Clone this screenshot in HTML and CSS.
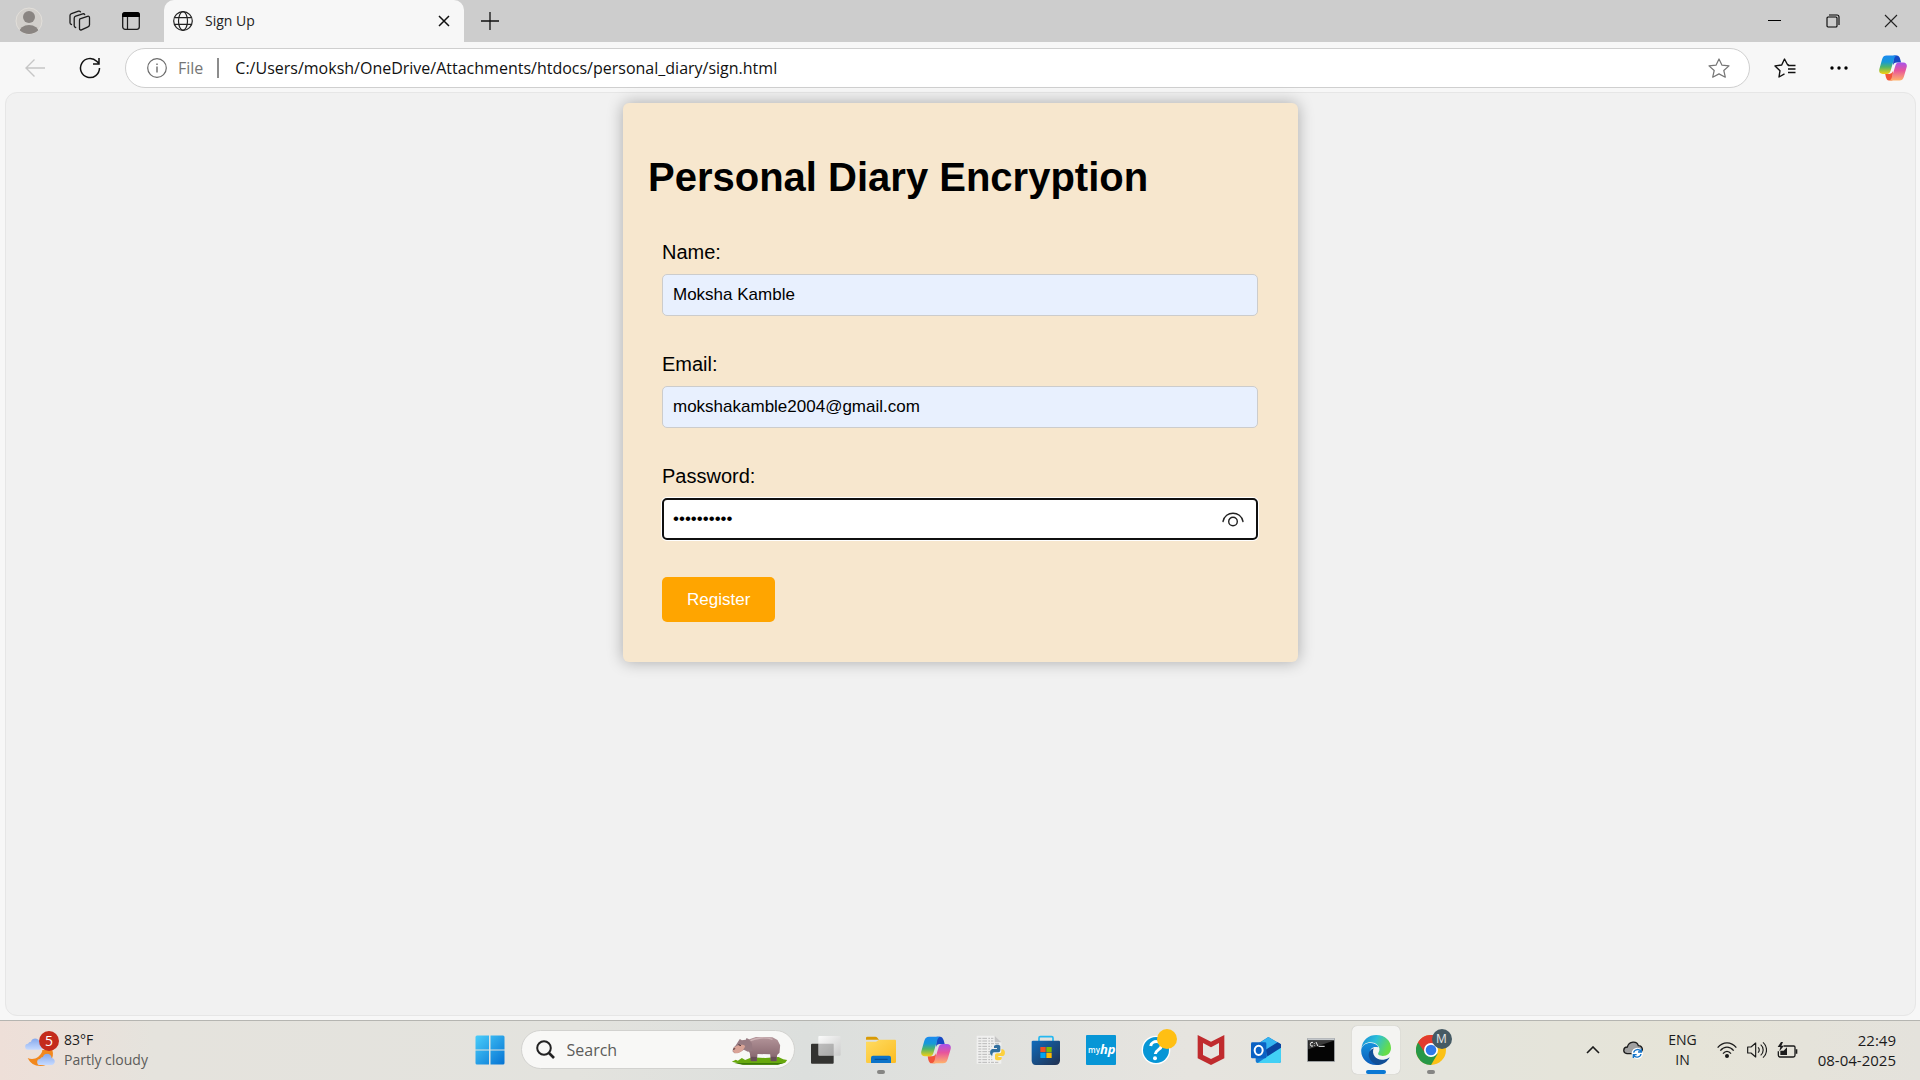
FILE: index.html
```html
<!DOCTYPE html>
<html lang="en">
<head>
<meta charset="utf-8">
<meta name="viewport" content="width=device-width, initial-scale=1">
<title>Sign Up</title>
<link rel="stylesheet" href="styles.css">
</head>
<body>
<svg class="defs" aria-hidden="true">
  <defs>
    <linearGradient id="cp-a" x1="0" y1="0" x2="0" y2="1"><stop offset="0" stop-color="#1b8af0"/><stop offset=".35" stop-color="#1799d8"/><stop offset=".62" stop-color="#4fb56a"/><stop offset="1" stop-color="#f5cf12"/></linearGradient>
    <linearGradient id="cp-b" x1="0" y1="0" x2="0" y2="1"><stop offset="0" stop-color="#a653ec"/><stop offset=".45" stop-color="#e8559b"/><stop offset="1" stop-color="#ffb36b"/></linearGradient>
    <symbol id="copilot" viewBox="0 0 90 82">
      <path d="M47 1h10c6 0 9 5 11 11l3 11H57c-7 0-10 4-12 9z" fill="#1749c4"/>
      <path d="M43 81H32c-6 0-8-5-10-11l-2-10h13c7 0 10-4 12-9z" fill="#f2553a"/>
      <path d="M24 1h34c-6 1-8 6-10 13L37 51c-2 6-5 9-11 9H12C3 60-1 54 1 45L10 13C13 4 17 1 24 1z" fill="url(#cp-a)"/>
      <path d="M66 81H32c6-1 8-6 10-13l11-36c2-6 5-9 11-9h14c9 0 13 6 11 15l-9 31c-3 9-7 12-14 12z" fill="url(#cp-b)"/>
    </symbol>
    <symbol id="cloud" viewBox="0 0 54 36"><path d="M10 35a9 9 0 0 1-1-18 10 10 0 0 1 9-6c3-13 24-13 26 3 13 2 12 21-1 21z" fill="url(#cl)"/></symbol>
    <linearGradient id="cl" x1="0" y1="0" x2="0" y2="1"><stop offset="0" stop-color="#86a9ec"/><stop offset="1" stop-color="#c6daff"/></linearGradient>
    <linearGradient id="win" x1="0" y1="0" x2="1" y2="1"><stop offset="0" stop-color="#49cdfa"/><stop offset="1" stop-color="#0573d3"/></linearGradient>
    <linearGradient id="hip" x1="0" y1="0" x2="0" y2="1"><stop offset="0" stop-color="#b39499"/><stop offset="1" stop-color="#806068"/></linearGradient>
    <linearGradient id="fold" x1="0" y1="0" x2="1" y2="1"><stop offset="0" stop-color="#ffdc62"/><stop offset="1" stop-color="#fbbc22"/></linearGradient>
    <linearGradient id="store" x1="0" y1="0" x2="1" y2="1"><stop offset="0" stop-color="#0f6cbd"/><stop offset="1" stop-color="#22304f"/></linearGradient>
    <linearGradient id="edge-a" x1="0" y1="0" x2="1" y2=".4"><stop offset="0" stop-color="#1687d6"/><stop offset=".5" stop-color="#2bbfd9"/><stop offset="1" stop-color="#66dd48"/></linearGradient>
    <linearGradient id="edge-b" x1="0" y1="0" x2="0" y2="1"><stop offset="0" stop-color="#1591dc"/><stop offset="1" stop-color="#0c5cba"/></linearGradient>
    <linearGradient id="glass" x1="0" y1="0" x2="1" y2="1"><stop offset="0" stop-color="#fff"/><stop offset="1" stop-color="#c9c9c9"/></linearGradient>
  </defs>
</svg>

<header class="tabbar">
  <div class="tab-tools">
    <button class="tool" aria-label="Profile"><svg width="28" height="28" viewBox="0 0 28 28"><clipPath id="av"><circle cx="14" cy="14" r="13"/></clipPath><circle cx="14" cy="14" r="13" fill="#d2cfcb" stroke="#e2dfda"/><g fill="#8a8582" clip-path="url(#av)"><circle cx="14" cy="10" r="6"/><ellipse cx="14" cy="26" rx="10" ry="8"/></g></svg></button>
    <button class="tool" aria-label="Workspaces"><svg width="22" height="22" viewBox="0 0 22 22" fill="none" stroke="#1b1b1b" stroke-width="1.3" stroke-linejoin="round" stroke-linecap="round"><path d="M11 8.800l7.500-2.500q2-.5 2 1.500v7q0 1.500-1.500 2l-6.500 3q-2 .7-2-1.300V10.500q0-1.200.5-1.700z"/><path d="M6.700 17.500q-1.500-.2-1.500-1.700V8.200q0-1.500 1.500-2l7-2.400q1.500-.3 2 .8"/><path d="M2.500 14.500Q1 14.300 1 12.800V5.600Q1 4.200 2.500 3.600l7-2.400q1.300-.3 2 .6"/></svg></button>
    <button class="tool" aria-label="Tab actions"><svg width="20" height="20" viewBox="0 0 20 20"><rect x="1.700" y="1.700" width="16.600" height="16.600" rx="2.500" fill="none" stroke="#1b1b1b" stroke-width="1.300"/><path d="M1 6V4q0-3 3-3h12q3 0 3 3v2z"/><path d="M6.500 6v12" stroke="#1b1b1b" stroke-width="1.200"/></svg></button>
  </div>
  <div class="tab">
    <svg width="20" height="20" viewBox="0 0 20 20" fill="none" stroke="#222" stroke-width="1.200"><circle cx="10" cy="10" r="9.300"/><ellipse cx="10" cy="10" rx="4.500" ry="9.300"/><path d="M1.500 6.700h17M1.500 13.300h17"/></svg>
    <span class="tab-title">Sign Up</span>
    <button class="tool-close" aria-label="Close tab"><svg width="12" height="12" viewBox="0 0 12 12" stroke="#111" stroke-width="1.500"><path d="M1 1l10 10M11 1L1 11"/></svg></button>
  </div>
  <button class="tool" aria-label="New tab"><svg width="18" height="18" viewBox="0 0 18 18" stroke="#111" stroke-width="1.300"><path d="M9 0v18M0 9h18"/></svg></button>
  <div class="window-buttons">
    <button aria-label="Minimize"><svg width="14" height="14" viewBox="0 0 14 14"><path d="M0 6.500h13" stroke="#000"/></svg></button>
    <button aria-label="Restore"><svg width="14" height="14" viewBox="0 0 14 14" fill="none" stroke="#000" stroke-width="1.100"><rect x="1" y="3" width="10" height="10" rx="1"/><path d="M3 1h8q2 0 2 2v8"/></svg></button>
    <button aria-label="Close"><svg width="14" height="14" viewBox="0 0 14 14" stroke="#222" stroke-width="1.100"><path d="M1 1l12 12M13 1L1 13"/></svg></button>
  </div>
</header>

<nav class="toolbar">
  <button class="nav-button" aria-label="Back" disabled><svg width="20" height="18" viewBox="0 0 20 18" fill="none" stroke="#c6c6c6" stroke-width="1.400"><path d="M20 9H1M9.500.500L1 9l8.500 8.500"/></svg></button>
  <button class="nav-button" aria-label="Refresh"><svg width="22" height="22" viewBox="0 0 22 22" fill="none" stroke="#111" stroke-width="1.500"><path d="M20.500 11A9.500 9.500 0 1 1 17.700 4.300L20 6.500M20 1v6h-6"/></svg></button>
  <div class="address">
    <svg width="20" height="20" viewBox="0 0 20 20" fill="none" stroke="#6b6b6b" stroke-width="1.200"><circle cx="10" cy="10" r="9.300"/><path d="M10 8.500v6M10 5.500v1.500" stroke-width="1.400"/></svg>
    <span class="scheme">File</span>
    <span class="divider"></span>
    <input class="url" type="text" aria-label="Address" value="C:/Users/moksh/OneDrive/Attachments/htdocs/personal_diary/sign.html">
    <button class="star" aria-label="Add to favorites"><svg width="22" height="20" viewBox="0 0 22 20" fill="none" stroke="#757575" stroke-width="1.200" stroke-linejoin="round"><path d="M11 1l3 6.200 7 .7-5.200 4.600 1.500 6.700L11 15.900l-6.300 3.300 1.500-6.700L1 7.900l7-.7z"/></svg></button>
  </div>
  <div class="toolbar-end">
    <button aria-label="Favorites"><svg width="22" height="20" viewBox="0 0 22 20" fill="none" stroke="#111" stroke-width="1.400" stroke-linejoin="round"><path d="M15 7L13.700 7 10.500 1 7.700 7 1 7.900l5 4.800-1 6.300 5.500-3.100"/><path d="M14 7.500h7.500M14 11h7.500M14 14.500h7.500"/></svg></button>
    <button aria-label="Settings and more"><svg width="18" height="4" viewBox="0 0 18 4"><circle cx="2" cy="2" r="1.700"/><circle cx="9" cy="2" r="1.700"/><circle cx="16" cy="2" r="1.700"/></svg></button>
    <button aria-label="Copilot"><svg width="28" height="26"><use href="#copilot"/></svg></button>
  </div>
</nav>

<main class="viewport">
  <section class="card">
    <h1>Personal Diary Encryption</h1>
    <form class="signup">
      <label for="name">Name:</label>
      <input class="field autofilled" id="name" type="text" value="Moksha Kamble">
      <label for="email">Email:</label>
      <input class="field autofilled" id="email" type="email" value="mokshakamble2004@gmail.com">
      <label for="password">Password:</label>
      <div class="password">
        <input class="field active" id="password" type="password" value="diarypass1">
        <button class="reveal" type="button" aria-label="Show password"><svg width="22" height="16" viewBox="0 0 22 16" fill="none" stroke="#222" stroke-width="1.400" stroke-linecap="round"><path d="M1 9.500C3 -1.500 19 -1.500 21 9.500"/><circle cx="11" cy="9.500" r="4.300"/></svg></button>
      </div>
      <button class="register" type="button">Register</button>
    </form>
  </section>
</main>

<footer class="taskbar">
  <div class="weather">
    <div class="weather-icon">
      <svg width="34" height="36" viewBox="0 0 102 108"><path d="M8 78c10 4 22 4 32-4 9-7 12-15 12-20h30c8 24-10 48-36 48-18 0-30-8-38-24z" fill="#f2881d"/><use href="#cloud" x="0" y="18" width="54" height="36"/><use href="#cloud" x="36" y="64" width="54" height="36"/></svg>
      <span class="badge">5</span>
    </div>
    <div class="weather-text"><span>83°F</span><span class="muted">Partly cloudy</span></div>
  </div>

  <div class="apps">
    <button class="app" aria-label="Start"><svg width="30" height="30" viewBox="0 0 30 30"><g fill="url(#win)"><path d="M2 .500h12v14H.500V2Q.500.500 2 .500zM15.500.500H28q1.500 0 1.500 1.500v12.500h-14zM.500 15.500H14v14H2Q.500 29.500.500 28zM15.500 15.500h14V28q0 1.500-1.500 1.500H15.500z"/></g></svg></button>
    <label class="search">
      <svg width="19" height="19" viewBox="0 0 19 19" fill="none" stroke="#222" stroke-width="2"><circle cx="8" cy="8" r="6.800"/><path d="M13 13l5 5" stroke-width="2.600"/></svg>
      <input type="search" placeholder="Search" aria-label="Search">
      <svg width="57" height="32" viewBox="816 64 170 96">
        <path d="M818 147l12-6 6 3 12-8 10 6 20-8 40 2 40-3 14 7 12 2-6 8-24 6h-100z" fill="#67a80d"/>
        <path d="M826 151h148l-18 5H850z" fill="#3d7b08"/>
        <path d="M866 110l6 12 3 24h18l2-22 38 1 2 21h17l2-19 7-7 2-22-8-16-15-8-50-1-24 8z" fill="url(#hip)"/>
        <path d="M838 85l4-6 6 4 12-2 2-5 6 3 10 12 2 24-14 2-12-6-16 9-12 2-6-6 2-10 8-8z" fill="#987b82"/>
        <path d="M822 108c8-10 28-16 36-8-4 12-14 22-28 22-8-2-10-8-8-14z" fill="#d9a396"/>
        <path d="M838 96l7 3M822 110l6-2" stroke="#39262b" stroke-width="3"/>
        <path d="M875 132v13h18v-12M935 132v13h17v-12" fill="#685058"/>
        <path d="M874 84c16-8 44-12 66-4" stroke="#cdb3b5" stroke-width="4" fill="none"/>
      </svg>
    </label>
    <button class="app" aria-label="Task view"><svg width="30" height="30" viewBox="0 0 90 90"><rect x="0" y="26" width="68" height="60" rx="3" fill="#333331"/><rect x="22" y="3" width="67" height="59" rx="3" fill="url(#glass)" fill-opacity=".88"/><path d="M22 26h46v36H25q-3 0-3-3z" fill="#777" fill-opacity=".3"/></svg></button>
    <button class="app running" aria-label="File Explorer"><svg width="30" height="30" viewBox="0 0 90 90"><path d="M0 9q0-4 4-4h24q4 0 6 3l5 6H0z" fill="#d99a05"/><path d="M0 20h30l9-6h48q3 0 3 4v62q0 4-4 4H4q-4 0-4-4z" fill="url(#fold)"/><path d="M15 84V68q0-6 6-6h48q6 0 6 6v16z" fill="#0c73c8"/><path d="M26 73h39" stroke="#074b8d" stroke-width="3"/></svg></button>
    <button class="app" aria-label="Copilot"><svg width="30" height="30"><use href="#copilot"/></svg></button>
    <button class="app" aria-label="Python file"><svg width="30" height="30" viewBox="0 0 90 90"><path d="M2 2h54l20 20v64H2z" fill="#f0f0ef"/><path d="M56 2v20h20z" fill="#c5c5c5"/><path d="M7 10h45M7 18h45M7 26h62M7 34h40M7 42h36M7 50h36M7 58h36M7 66h40M7 74h42M7 82h60" stroke="#b9b9b9" stroke-width="3" stroke-dasharray="9 3 14 4 5 3"/><path d="M54 34c2-6 18-6 19 0v12q0 6-6 6H55q-6 0-6 7v3c-9 0-9-19 0-20h14v-3h-9z" fill="#33709f"/><path d="M76 43h4c9 1 9 20 0 20H67v3h10v5c-2 6-19 6-20 0V60q0-5 6-5h8q5 0 5-6z" fill="#fcd03d"/></svg></button>
    <button class="app" aria-label="Microsoft Store"><svg width="30" height="30" viewBox="0 0 90 90"><path d="M24 18V9q0-4 4-4h34q4 0 4 4v9" fill="none" stroke="#26b8f0" stroke-width="5"/><path d="M6 17h78q3 0 3 3v56q0 14-14 14H14Q2 90 2 76V20q0-3 4-3z" fill="url(#store)"/><path d="M28 36h16v15H28z" fill="#f25022"/><path d="M46 36h16v15H46z" fill="#7fba00"/><path d="M28 53h16v16H28z" fill="#00a4ef"/><path d="M46 53h16v16H46z" fill="#ffb900"/></svg></button>
    <button class="app" aria-label="myHP"><svg width="30" height="30" viewBox="0 0 30 30"><rect width="30" height="30" rx="1" fill="#0796d6"/><text class="myhp" x="2" y="18" font-size="8">my</text><text class="myhp slant" x="14" y="19" font-size="13">hp</text></svg></button>
    <button class="app" aria-label="HP Support"><svg width="42" height="42" viewBox="0 0 126 126"><circle cx="63" cy="63" r="43" fill="#fff"/><circle cx="63" cy="63" r="39" fill="#0796d6"/><path d="M47 51c3-18 34-17 32 0-1 11-17 11-18 24" fill="none" stroke="#fff" stroke-width="9"/><circle cx="60" cy="88" r="6" fill="#fff"/><circle cx="96" cy="30" r="30" fill="#ffbf13"/></svg></button>
    <button class="app" aria-label="McAfee"><svg width="28" height="30" viewBox="0 0 84 90"><path d="M2 0l40 20L82 0v70L42 90 2 70zM18 24v36l24 12 24-12V24L42 37z" fill="#c02b2e" fill-rule="evenodd"/></svg></button>
    <button class="app" aria-label="Outlook"><svg width="30" height="30" viewBox="0 0 90 90"><path d="M14 30l38-24 38 22v50q0 6-6 6H20q-6 0-6-6z" fill="#167bd2"/><path d="M22 27l30-21 28 17-36 24z" fill="#34b4f0"/><path d="M44 44l36-22 10 6v12L50 66z" fill="#0b449f"/><path d="M90 38v40q0 6-6 6H20l30-20z" fill="#42d0f5"/><rect x="0" y="22" width="46" height="48" rx="4" fill="#0b62c4"/><ellipse cx="23" cy="46" rx="12" ry="14" fill="none" stroke="#fff" stroke-width="6"/></svg></button>
    <button class="app" aria-label="Command Prompt"><svg width="28" height="24" viewBox="0 0 84 72"><rect x="1" y="1" width="82" height="70" fill="#050505" stroke="#a9adb1" stroke-width="3"/><path d="M2 4h80" stroke="#c4c8cb" stroke-width="6"/><path d="M4 8h76L4 34z" fill="#3a3a3a"/><path d="M18 13q-8-2-8 6t8 5M22 15v2M22 21v2M27 12l6 13M35 25h18" stroke="#eee" stroke-width="3" fill="none"/></svg></button>
    <button class="app current" aria-label="Microsoft Edge"><svg width="30" height="30" viewBox="0 0 90 90"><path d="M1 42C4 14 23 0 46 0c27 0 44 18 44 39 0 15-11 24-25 24-10 0-17-4-12-11 9-15-8-30-24-30C15 22 4 30 1 42z" fill="url(#edge-a)"/><path d="M1 42c4-12 15-19 29-18 12 1 20 6 22 13-22-6-30 12-22 26 6 11 15 18 24 26C25 95-3 72 1 42z" fill="url(#edge-b)"/><path d="M38 40c-8 20 10 38 30 34 8-1 14-4 18-7-7 14-20 22-33 23-16-2-30-17-30-31 0-9 6-16 15-19z" fill="#114f97"/></svg></button>
    <button class="app running" aria-label="Google Chrome"><svg width="30" height="30" viewBox="0 0 90 90"><circle cx="45" cy="45" r="45" fill="#fbc116"/><path d="M45 45L6 22.500A45 45 0 0 1 84 22.500z" fill="#e33b2e"/><path d="M45 45L6 22.500A45 45 0 0 0 45 90l20-34z" fill="#279847"/><path d="M45 25h39a45 45 0 0 0-78-2.500L28 55z" fill="#e33b2e"/><circle cx="45" cy="45" r="21" fill="#fff"/><circle cx="45" cy="45" r="16" fill="#2f79ea"/></svg><span class="profile-badge">M</span></button>
  </div>

  <div class="tray">
    <button aria-label="Show hidden icons"><svg width="14" height="8" viewBox="0 0 14 8" fill="none" stroke="#1b1b1b" stroke-width="1.600"><path d="M1 7l6-6 6 6"/></svg></button>
    <button aria-label="OneDrive"><svg width="20" height="18" viewBox="0 0 60 54"><path d="M12 38C-2 36 0 18 13 18 18-1 42-1 46 14c15 1 17 22 2 24z" fill="#a0a0a0" stroke="#1c1c1c" stroke-width="4"/><circle cx="43" cy="37" r="17" fill="#fff"/><path d="M32 35c2-11 18-13 22-3M54 39c-2 11-18 13-22 3M55 23v10H45M31 51V41h10" fill="none" stroke="#1474c9" stroke-width="4"/></svg></button>
    <div class="language"><span>ENG</span><span>IN</span></div>
    <svg width="20" height="16" viewBox="0 0 60 48" fill="none" stroke="#1b1b1b" stroke-width="4"><path d="M2 17c16-19 40-19 56 0M10 26c12-14 28-14 40 0M18 35c7-9 17-9 24 0"/><circle cx="30" cy="42" r="4" fill="#1b1b1b"/></svg>
    <svg width="20" height="18" viewBox="0 0 60 54" fill="none" stroke="#1b1b1b" stroke-width="3.500" stroke-linejoin="round"><path d="M2 18h10L26 6v42L12 36H2z"/><path d="M33 19c5 4 5 12 0 16M41 11c10 8 10 24 0 32M48 4c14 12 14 34 0 46"/></svg>
    <svg width="21" height="16" viewBox="0 0 63 48"><path d="M20 12h30q4 0 4 4v24q0 5-5 5H9q-5 0-5-5V28" fill="none" stroke="#1b1b1b" stroke-width="4"/><path d="M56 22h5v13h-5zM10 26h10l10-10v23H10z" fill="#1b1b1b"/><path d="M12 0L2 15h8l-3 13 14-17h-8l5-11z" fill="#1b1b1b"/></svg>
    <div class="clock"><span>22:49</span><span>08-04-2025</span></div>
  </div>
</footer>
</body>
</html>
```
FILE: styles.css
```css
* { box-sizing: border-box; }

body {
  margin: 0;
  min-height: 100vh;
  display: flex;
  flex-direction: column;
  background: #f7f7f7;
  color: #1b1b1b;
  font-family: "Open Sans", "Noto Sans", sans-serif;
  font-size: 14px;
}

button {
  display: flex;
  align-items: center;
  justify-content: center;
  padding: 0;
  border: 0;
  background: none;
  font: inherit;
}

svg { display: block; flex: none; }
.defs { position: absolute; width: 0; height: 0; }

/* Tab strip */
.tabbar {
  display: flex;
  height: 42px;
  background: #cdcdcd;
}
.tab-tools { display: flex; padding: 0 8px 0 3px; }
.tool { width: 51px; height: 42px; }
.tab {
  display: flex;
  align-items: center;
  width: 300px;
  height: 42px;
  padding: 0 14px 0 9px;
  gap: 12px;
  border-radius: 10px 10px 0 0;
  background: #f7f7f7;
}
.tab-title { flex: 1; padding-bottom: 2px; color: #222; }
.window-buttons { display: flex; margin-left: auto; }
.window-buttons button { width: 58px; height: 42px; }

/* Address row */
.toolbar {
  display: flex;
  align-items: center;
  height: 50px;
  padding: 2px 0 0 7px;
}
.nav-button { width: 55px; height: 40px; }
.address {
  flex: 1;
  display: flex;
  align-items: center;
  height: 40px;
  margin-left: 8px;
  padding: 0 19px 0 21px;
  border: 1px solid #cfcfcf;
  border-radius: 20px;
  background: #fff;
  font-size: 16px;
}
.scheme { margin-left: 11px; color: #757575; }
.divider { width: 2px; height: 20px; margin: 0 16px 0 14px; background: #8c8c8c; }
.url {
  flex: 1;
  padding: 0;
  border: 0;
  outline: 0;
  background: none;
  color: #111;
  font: inherit;
}
.toolbar-end { display: flex; padding: 0 0 0 8px; }
.toolbar-end button { width: 54px; height: 40px; }

/* Page area */
.viewport {
  flex: 1;
  margin: 0 4px 4px 5px;
  padding: 10px;
  border: 1px solid #e6e6e6;
  border-radius: 12px;
  background: #f1f1f1;
  font-family: "Liberation Sans", Arial, sans-serif;
}
.card {
  max-width: 675px;
  margin: 0 auto;
  padding: 25px;
  border-radius: 6px;
  background: #f7e7ce;
  box-shadow: 0 0 16px rgba(0, 0, 0, 0.3);
  color: #000;
}
h1 {
  margin: 26px 0 28px;
  font-size: 40px;
  line-height: 46px;
}
.signup {
  display: flex;
  flex-direction: column;
  align-items: stretch;
  padding: 13px 15px 15px 14px;
}
label[for] {
  margin-bottom: 10px;
  font-size: 20px;
  line-height: 23px;
}
.field {
  width: 100%;
  height: 42px;
  margin-bottom: 37px;
  padding: 10px;
  border: 1px solid #ccc;
  border-radius: 5px;
  background: #fff;
  color: #000;
  font-family: inherit;
  font-size: 17px;
}
.autofilled { background: #e8f0fe; }
.active {
  padding: 9px;
  border: 2px solid #101010;
  box-shadow: 0 0 0 1px #fff;
}
.password { position: relative; }
.reveal { position: absolute; top: 14px; right: 14px; }
.register {
  align-self: flex-start;
  padding: 12px 25px;
  border-radius: 5px;
  background: #ffa500;
  color: #fff;
  font-size: 17px;
  line-height: 21px;
}

/* Taskbar */
.taskbar {
  display: grid;
  grid-template-columns: 1fr auto 1fr;
  align-items: center;
  height: 60px;
  padding-bottom: 2px;
  border-top: 1px solid #b5b5b1;
  background: linear-gradient(90deg, #eedfd8 0, #e5e3dd 8%, #e3e3de 30%, #dcdfdd 42%, #e6e4df 62%, #e4e4dc 75%, #e6e4d8 88%, #e4e2dc 100%);
}
.weather { display: flex; align-items: center; gap: 5px; padding-left: 25px; }
.weather-icon { position: relative; }
.badge {
  position: absolute;
  top: -1px;
  left: 14px;
  width: 20px;
  height: 20px;
  border-radius: 50%;
  background: #c42b1c;
  color: #fff;
  font-size: 14px;
  line-height: 20px;
  text-align: center;
}
.weather-text, .language, .clock {
  display: flex;
  flex-direction: column;
  line-height: 20px;
}
.muted { color: #5c5c5a; }
.apps { display: flex; align-items: center; gap: 7px; }
.app { position: relative; width: 48px; height: 48px; border-radius: 5px; }
.running::after, .current::after {
  content: "";
  position: absolute;
  bottom: 0;
  width: 8px;
  height: 4px;
  border-radius: 2px;
  background: #868684;
}
.current { background: #f4f4f2; box-shadow: 0 0 1px #aaa; }
.current::after { width: 20px; background: #0a78d4; }
.search {
  display: flex;
  align-items: center;
  width: 274px;
  height: 39px;
  padding: 0 6px 0 14px;
  gap: 12px;
  border: 1px solid #d2d2cf;
  border-radius: 20px;
  background: #f8f8f6;
}
.search input {
  flex: 1;
  min-width: 0;
  padding: 0;
  border: 0;
  outline: 0;
  background: none;
  font: inherit;
  font-size: 16px;
}
.search input::placeholder { color: #5c5c5a; }
.myhp { fill: #fff; font-family: "Open Sans", sans-serif; font-weight: 600; }
.slant { font-style: italic; font-weight: 700; }
.profile-badge {
  position: absolute;
  top: 3px;
  left: 25px;
  width: 20px;
  height: 20px;
  border-radius: 50%;
  background: #455a64;
  color: #e6e6e6;
  font-size: 12px;
  line-height: 20px;
  text-align: center;
}
.tray {
  display: flex;
  align-items: center;
  justify-content: flex-end;
  gap: 10px;
  padding-right: 24px;
}
.tray button { width: 30px; height: 40px; }
.language { align-items: center; margin: 0 10px; }
.clock { align-items: flex-end; margin-left: 10px; font-size: 15px; }
```
